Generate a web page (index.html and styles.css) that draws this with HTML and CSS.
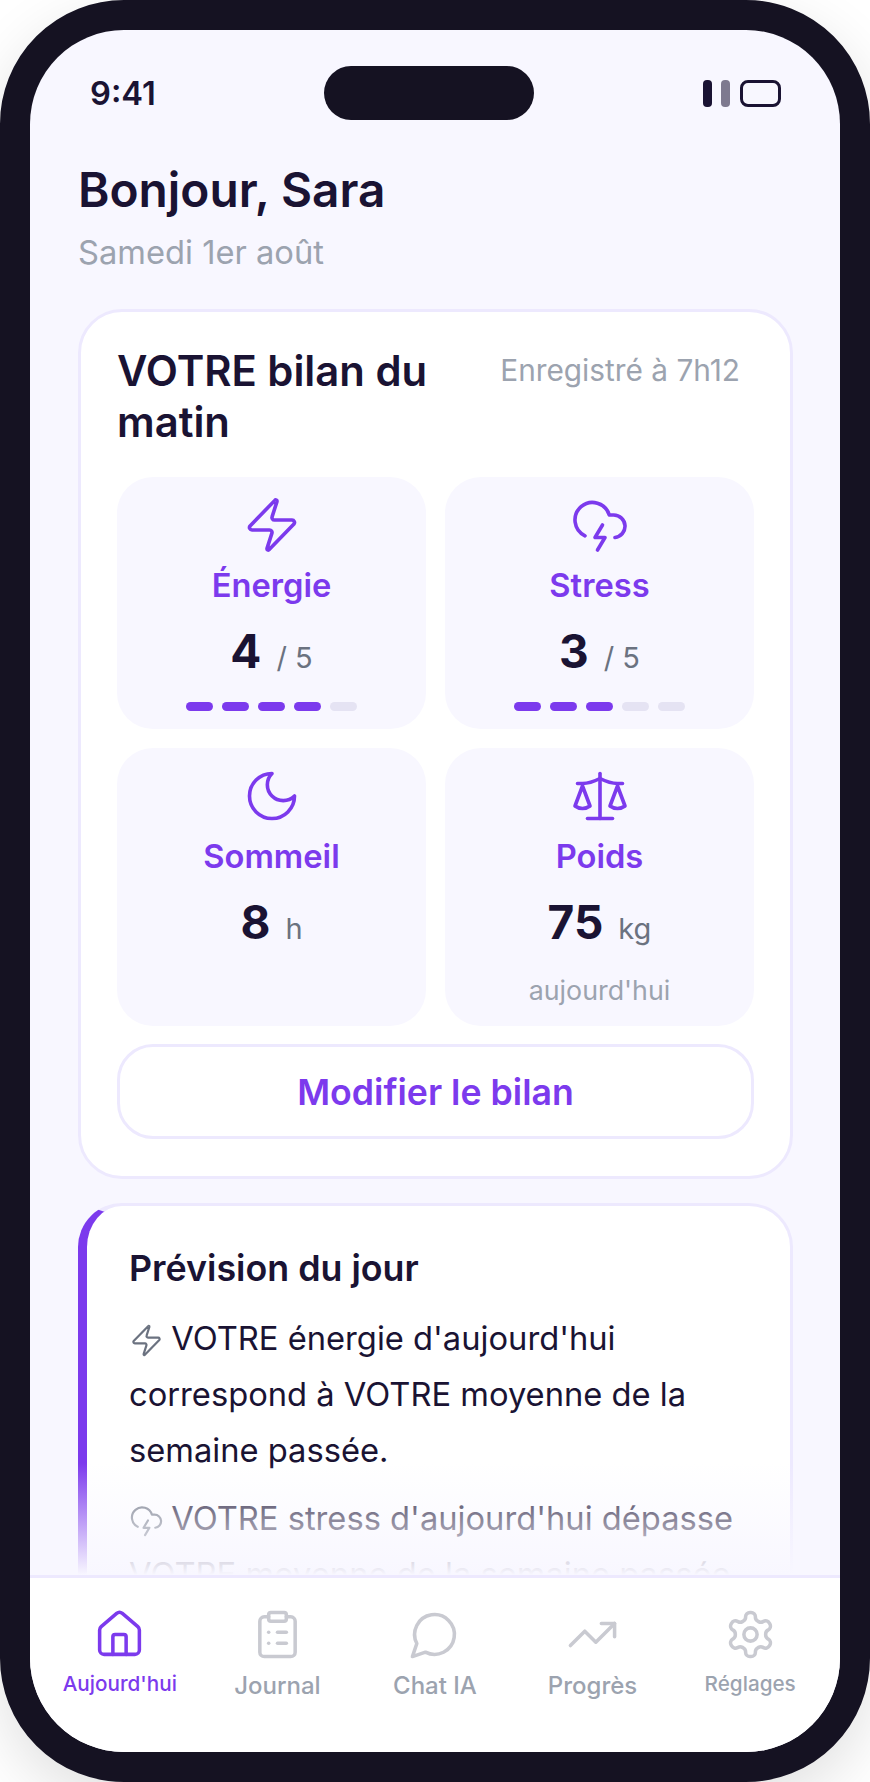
FILE: index.html
```html
<!DOCTYPE html>
<html lang="fr">
  <head>
    <meta charset="UTF-8" />
    <meta name="viewport" content="width=device-width, initial-scale=1.0" />
    <title>Aujourd'hui</title>
    <link rel="stylesheet" href="styles.css">
  </head>
  <body>
    <div class="phone">
      <div class="screen">
        <div class="status-bar">
          <span class="time">9:41</span>
          <div class="island"></div>
          <div class="status-icons">
            <span class="bar"></span>
            <span class="bar bar-dim"></span>
            <span class="battery"></span>
          </div>
        </div>

        <div class="content">
          <header class="greeting">
            <h1>Bonjour, Sara</h1>
            <p>Samedi 1er août</p>
          </header>

          <section class="card">
            <div class="card-head">
              <h2>VOTRE bilan du matin</h2>
              <span class="saved">Enregistré à 7h12</span>
            </div>
            <div class="tiles">
              <div class="tile">
                <svg class="tile-icon" viewBox="0 0 24 24"><path d="M4 14a1 1 0 0 1-.78-1.63l9.9-10.2a.5.5 0 0 1 .86.46l-1.92 6.02A1 1 0 0 0 13 10h7a1 1 0 0 1 .78 1.63l-9.9 10.2a.5.5 0 0 1-.86-.46l1.92-6.02A1 1 0 0 0 11 14z"/></svg>
                <div class="tile-label">Énergie</div>
                <div class="tile-value"><b>4</b><span>/ 5</span></div>
                <div class="dots"><i class="on"></i><i class="on"></i><i class="on"></i><i class="on"></i><i></i></div>
              </div>
              <div class="tile">
                <svg class="tile-icon" viewBox="0 0 24 24"><path d="M6 16.326A7 7 0 1 1 15.71 8h1.79a4.5 4.5 0 0 1 .5 8.973"/><path d="m13 12-3 5h4l-3 5"/></svg>
                <div class="tile-label">Stress</div>
                <div class="tile-value"><b>3</b><span>/ 5</span></div>
                <div class="dots"><i class="on"></i><i class="on"></i><i class="on"></i><i></i><i></i></div>
              </div>
              <div class="tile">
                <svg class="tile-icon" viewBox="0 0 24 24"><path d="M12 3a6 6 0 0 0 9 9 9 9 0 1 1-9-9Z"/></svg>
                <div class="tile-label">Sommeil</div>
                <div class="tile-value"><b>8</b><span>h</span></div>
              </div>
              <div class="tile">
                <svg class="tile-icon" viewBox="0 0 24 24"><path d="m16 16 3-8 3 8c-.87.65-1.92 1-3 1s-2.13-.35-3-1Z"/><path d="m2 16 3-8 3 8c-.87.65-1.92 1-3 1s-2.13-.35-3-1Z"/><path d="M7 21h10"/><path d="M12 3v18"/><path d="M3 7h2c2 0 5-1 7-2 2 1 5 2 7 2h2"/></svg>
                <div class="tile-label">Poids</div>
                <div class="tile-value"><b>75</b><span>kg</span></div>
                <div class="tile-note">aujourd'hui</div>
              </div>
            </div>
            <button class="edit-btn">Modifier le bilan</button>
          </section>

          <section class="card forecast">
            <h3>Prévision du jour</h3>
            <p><svg class="inline-icon" viewBox="0 0 24 24"><path d="M4 14a1 1 0 0 1-.78-1.63l9.9-10.2a.5.5 0 0 1 .86.46l-1.92 6.02A1 1 0 0 0 13 10h7a1 1 0 0 1 .78 1.63l-9.9 10.2a.5.5 0 0 1-.86-.46l1.92-6.02A1 1 0 0 0 11 14z"/></svg> VOTRE énergie d'aujourd'hui correspond à VOTRE moyenne de la semaine passée.</p>
            <p><svg class="inline-icon" viewBox="0 0 24 24"><path d="M6 16.326A7 7 0 1 1 15.71 8h1.79a4.5 4.5 0 0 1 .5 8.973"/><path d="m13 12-3 5h4l-3 5"/></svg> VOTRE stress d'aujourd'hui dépasse VOTRE moyenne de la semaine passée.</p>
          </section>

          <div class="fade"></div>
        </div>

        <nav class="tabbar">
          <a class="tab active">
            <svg viewBox="0 0 24 24"><path d="M15 21v-8a1 1 0 0 0-1-1h-4a1 1 0 0 0-1 1v8"/><path d="M3 10a2 2 0 0 1 .709-1.528l7-5.999a2 2 0 0 1 2.582 0l7 5.999A2 2 0 0 1 21 10v9a2 2 0 0 1-2 2H5a2 2 0 0 1-2-2z"/></svg>
            <span class="tab-small">Aujourd'hui</span>
          </a>
          <a class="tab">
            <svg viewBox="0 0 24 24"><rect x="8" y="2" width="8" height="4" rx="1"/><path d="M16 4h2a2 2 0 0 1 2 2v14a2 2 0 0 1-2 2H6a2 2 0 0 1-2-2V6a2 2 0 0 1 2-2h2"/><path d="M12 11h4"/><path d="M12 16h4"/><path d="M8 11h.01"/><path d="M8 16h.01"/></svg>
            <span>Journal</span>
          </a>
          <a class="tab">
            <svg viewBox="0 0 24 24"><path d="M7.9 20A9 9 0 1 0 4 16.1L2 22Z"/></svg>
            <span>Chat IA</span>
          </a>
          <a class="tab">
            <svg viewBox="0 0 24 24"><path d="M22 7 13.5 15.5 8.5 10.5 2 17"/><path d="M16 7h6v6"/></svg>
            <span>Progrès</span>
          </a>
          <a class="tab">
            <svg viewBox="0 0 24 24"><path d="M12.22 2h-.44a2 2 0 0 0-2 2v.18a2 2 0 0 1-1 1.73l-.43.25a2 2 0 0 1-2 0l-.15-.08a2 2 0 0 0-2.73.73l-.22.38a2 2 0 0 0 .73 2.73l.15.1a2 2 0 0 1 1 1.72v.51a2 2 0 0 1-1 1.74l-.15.09a2 2 0 0 0-.73 2.73l.22.38a2 2 0 0 0 2.73.73l.15-.08a2 2 0 0 1 2 0l.43.25a2 2 0 0 1 1 1.73V20a2 2 0 0 0 2 2h.44a2 2 0 0 0 2-2v-.18a2 2 0 0 1 1-1.73l.43-.25a2 2 0 0 1 2 0l.15.08a2 2 0 0 0 2.73-.73l.22-.39a2 2 0 0 0-.73-2.73l-.15-.08a2 2 0 0 1-1-1.74v-.5a2 2 0 0 1 1-1.74l.15-.09a2 2 0 0 0 .73-2.73l-.22-.38a2 2 0 0 0-2.73-.73l-.15.08a2 2 0 0 1-2 0l-.43-.25a2 2 0 0 1-1-1.73V4a2 2 0 0 0-2-2z"/><circle cx="12" cy="12" r="3"/></svg>
            <span class="tab-small">Réglages</span>
          </a>
        </nav>
      </div>
    </div>
  </body>
</html>
```

FILE: styles.css
```css
* {
  box-sizing: border-box;
}
body {
  margin: 0;
  background: #fff;
  font-family: Inter, "Liberation Sans", sans-serif;
  color: #1a1333;
  overflow: hidden;
}
svg {
  fill: none;
  stroke: currentColor;
  stroke-linecap: round;
  stroke-linejoin: round;
}
.phone {
  width: 870px;
  height: 1782px;
  border: 30px solid #151222;
  border-radius: 124px;
  background: #151222;
  box-shadow: 0 20px 60px rgba(0, 0, 0, 0.12);
}
.screen {
  height: 100%;
  border-radius: 94px;
  background: #f8f7ff;
  overflow: hidden;
  display: flex;
  flex-direction: column;
}
.status-bar {
  flex: none;
  display: flex;
  justify-content: space-between;
  align-items: center;
  padding: 36px 59px 0 60px;
}
.time {
  font-size: 32.7px;
  font-weight: 600;
}
.island {
  width: 210px;
  height: 54px;
  border-radius: 27px;
  background: #151222;
}
.status-icons {
  display: flex;
  align-items: center;
  gap: 9px;
}
.bar {
  width: 9px;
  height: 27px;
  border-radius: 4px;
  background: #1a1333;
}
.bar-dim {
  opacity: 0.55;
}
.battery {
  width: 41px;
  height: 27px;
  margin-left: 1px;
  border: 3px solid #1a1333;
  border-radius: 8px;
}
.content {
  position: relative;
  flex: 1;
  min-height: 0;
  overflow: hidden;
  padding: 42px 47px 0 48px;
}
.greeting h1 {
  margin: 0;
  font-size: 47.8px;
  line-height: 56px;
  font-weight: 600;
}
.greeting p {
  margin: 14px 0 0;
  font-size: 32.7px;
  line-height: 40px;
  color: #9ca3af;
}
.card {
  background: #fff;
  border: 3px solid #ede9fe;
  border-radius: 44px;
  padding: 34px 36px 37px;
  margin-top: 37px;
}
.card-head {
  display: flex;
  justify-content: space-between;
  align-items: flex-start;
  gap: 24px;
  padding-right: 14px;
}
.card-head h2 {
  margin: 0;
  font-size: 41.8px;
  line-height: 51px;
  font-weight: 600;
}
.saved {
  flex: none;
  margin-top: 4px;
  font-size: 29.8px;
  line-height: 40px;
  color: #9ca3af;
}
.tiles {
  display: grid;
  grid-template-columns: 1fr 1fr;
  gap: 19px;
  margin-top: 29px;
}
.tile {
  background: #f8f7ff;
  border-radius: 36px;
  padding: 18px 12px 18px;
  display: flex;
  flex-direction: column;
  align-items: center;
}
.tile-icon {
  width: 60px;
  height: 60px;
  margin-bottom: -2px;
  stroke-width: 1.45;
  color: #7c3aed;
}
.tile-label {
  margin-top: 12px;
  font-size: 32.7px;
  line-height: 40px;
  font-weight: 600;
  color: #7c3aed;
}
.tile-value {
  margin-top: 18px;
  display: flex;
  align-items: baseline;
  gap: 15px;
}
.tile-value b {
  font-size: 46px;
  line-height: 56px;
  font-weight: 700;
}
.tile-value span {
  font-size: 29px;
  color: #6b7280;
}
.dots {
  margin-top: 23px;
  display: flex;
  gap: 9px;
}
.dots i {
  width: 27px;
  height: 9px;
  border-radius: 5px;
  background: #e5e3f3;
}
.dots .on {
  background: #7c3aed;
}
.tile-note {
  margin-top: 22px;
  font-size: 26.8px;
  line-height: 36px;
  color: #9ca3af;
}
.edit-btn {
  display: block;
  width: 100%;
  height: 95px;
  margin-top: 18px;
  background: #fff;
  border: 3px solid #ede9fe;
  border-radius: 36px;
  font-family: inherit;
  font-size: 35.7px;
  font-weight: 600;
  color: #7c3aed;
}
.forecast {
  margin-top: 24px;
  border-left: 9px solid #7c3aed;
  padding: 40px 36px 36px 42px;
}
.forecast h3 {
  margin: 0;
  font-size: 35.8px;
  line-height: 44px;
  font-weight: 600;
}
.forecast p {
  margin: 20px 0 0;
  font-size: 32.7px;
  line-height: 56px;
}
.forecast p + p {
  margin-top: 12px;
}
.inline-icon {
  width: 35px;
  height: 35px;
  margin-right: -2px;
  vertical-align: -8px;
  stroke-width: 1.5;
  color: #6b7280;
}
.fade {
  position: absolute;
  left: 0;
  right: 0;
  bottom: 0;
  height: 112px;
  background: linear-gradient(to bottom, rgba(248, 247, 255, 0), #f8f7ff);
}
.tabbar {
  flex: none;
  height: 177px;
  background: #fff;
  border-top: 3px solid #ede9fe;
  display: flex;
  padding: 30px 11px 0;
}
.tab {
  flex: 1;
  display: flex;
  flex-direction: column;
  align-items: center;
  gap: 11px;
  font-size: 24px;
  font-weight: 500;
  line-height: 30px;
  color: #9ca3af;
}
.tab svg {
  width: 53px;
  height: 53px;
  margin-bottom: -1px;
  stroke-width: 1.6;
  color: #c9cad1;
}
.tab-small {
  margin-top: -2px;
  font-size: 20.7px;
}
.tab.active {
  color: #7c3aed;
}
.tab.active svg {
  color: #7c3aed;
}
```
